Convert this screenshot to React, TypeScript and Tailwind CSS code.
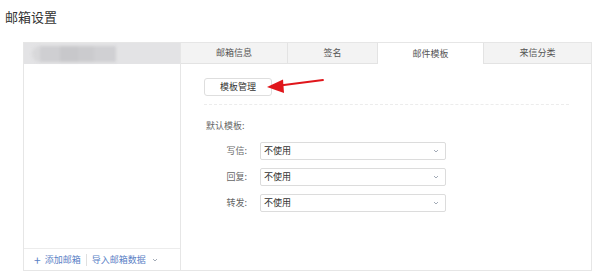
import React from "react";

const font = { fontFamily: '"Noto Sans CJK SC", "Noto Sans", sans-serif' };

function Chevron() {
  return (
    <svg width="6" height="4" viewBox="0 0 6 4" className="text-gray-400">
      <path d="M1 1 L3 3 L5 1" fill="none" stroke="currentColor" strokeWidth="0.9" />
    </svg>
  );
}

function SelectRow({ label }: { label: string }) {
  return (
    <div className="flex items-center h-[18px]">
      <div className="w-[40px] text-right text-[9px] text-[#666]">{label}:</div>
      <div className="ml-[13px] w-[186px] h-[18px] border border-[#dcdcdc] rounded-[2px] flex items-center justify-between pl-[3px] pr-[6px] text-[9px] text-[#333]">
        <span>不使用</span>
        <Chevron />
      </div>
    </div>
  );
}

export default function App() {
  const tabs = ["邮箱信息", "签名", "邮件模板", "来信分类"];
  const widths = ["w-[107px]", "w-[90px]", "w-[106px]", "w-[107px]"];
  return (
    <div className="w-[600px] h-[280px] bg-white relative overflow-hidden" style={font}>
      <div className="pl-[5px] pt-[8px] text-[13px] text-[#333] leading-[18px]">邮箱设置</div>
      <div className="ml-[23px] mt-[16px] w-[569px] h-[229px] border border-[#e6e6e6] flex">
        {/* left column */}
        <div className="w-[157px] border-r border-[#e6e6e6] flex flex-col">
          <div className="h-[21px] bg-[#e3e3e5] flex items-center pl-[8px] gap-0">
            <div className="flex h-[16px] blur-[1.5px]">
              <div className="w-[8px] h-full bg-[#d8d8da] rounded-l-full" />
              <div className="w-[20px] h-full bg-[#cfcfd2]" />
              <div className="w-[18px] h-full bg-[#c8c8cb]" />
              <div className="w-[16px] h-full bg-[#cbcbce]" />
              <div className="w-[22px] h-full bg-[#d0d0d3]" />
            </div>
          </div>
          <div className="flex-1" />
          <div className="h-[22px] border-t border-[#ececec] flex items-center pl-[10px] text-[9px] text-[#5b82c6]">
            <span className="text-[12px] leading-none mr-[4px]">+</span>
            <span>添加邮箱</span>
            <span className="mx-[5px] w-px h-[12px] bg-[#e0e0e0]" />
            <span>导入邮箱数据</span>
            <span className="ml-[6px] mt-[1px]"><Chevron /></span>
          </div>
        </div>
        {/* right column */}
        <div className="flex-1 flex flex-col">
          <div className="flex h-[21px]">
            {tabs.map((t, i) => (
              <div
                key={t}
                className={`${widths[i]} flex items-center justify-center text-[9px] text-[#555] border-[#e3e3e3] ${
                  i === 2 ? "bg-white border-r" : "bg-[#f3f3f3] border-b border-r"
                } ${i === 3 ? "border-r-0" : ""}`}
              >
                {t}
              </div>
            ))}
          </div>
          <div className="pl-[23px] pr-[22px] pt-[14px]">
            <div className="w-[68px] h-[18px] border border-[#dedede] rounded-[3px] flex items-center justify-center text-[9px] text-[#333]">
              模板管理
            </div>
            <div className="mt-[8px] border-t border-dashed border-[#ececec]" />
            <div className="mt-[14px] pl-[2px] text-[9px] text-[#666] leading-[14px]">默认模板:</div>
            <div className="mt-[9px] flex flex-col gap-[8px] pl-[3px]">
              <SelectRow label="写信" />
              <SelectRow label="回复" />
              <SelectRow label="转发" />
            </div>
          </div>
        </div>
      </div>
      {/* red annotation arrow */}
      <svg className="absolute left-[264px] top-[74px]" width="64" height="24" viewBox="0 0 64 24">
        <path d="M16 11.5 L59 6" stroke="#e0161b" strokeWidth="1.8" fill="none" strokeLinecap="round" />
        <path d="M3 13 L19 5.5 L20 19 Z" fill="#e0161b" />
      </svg>
    </div>
  );
}
